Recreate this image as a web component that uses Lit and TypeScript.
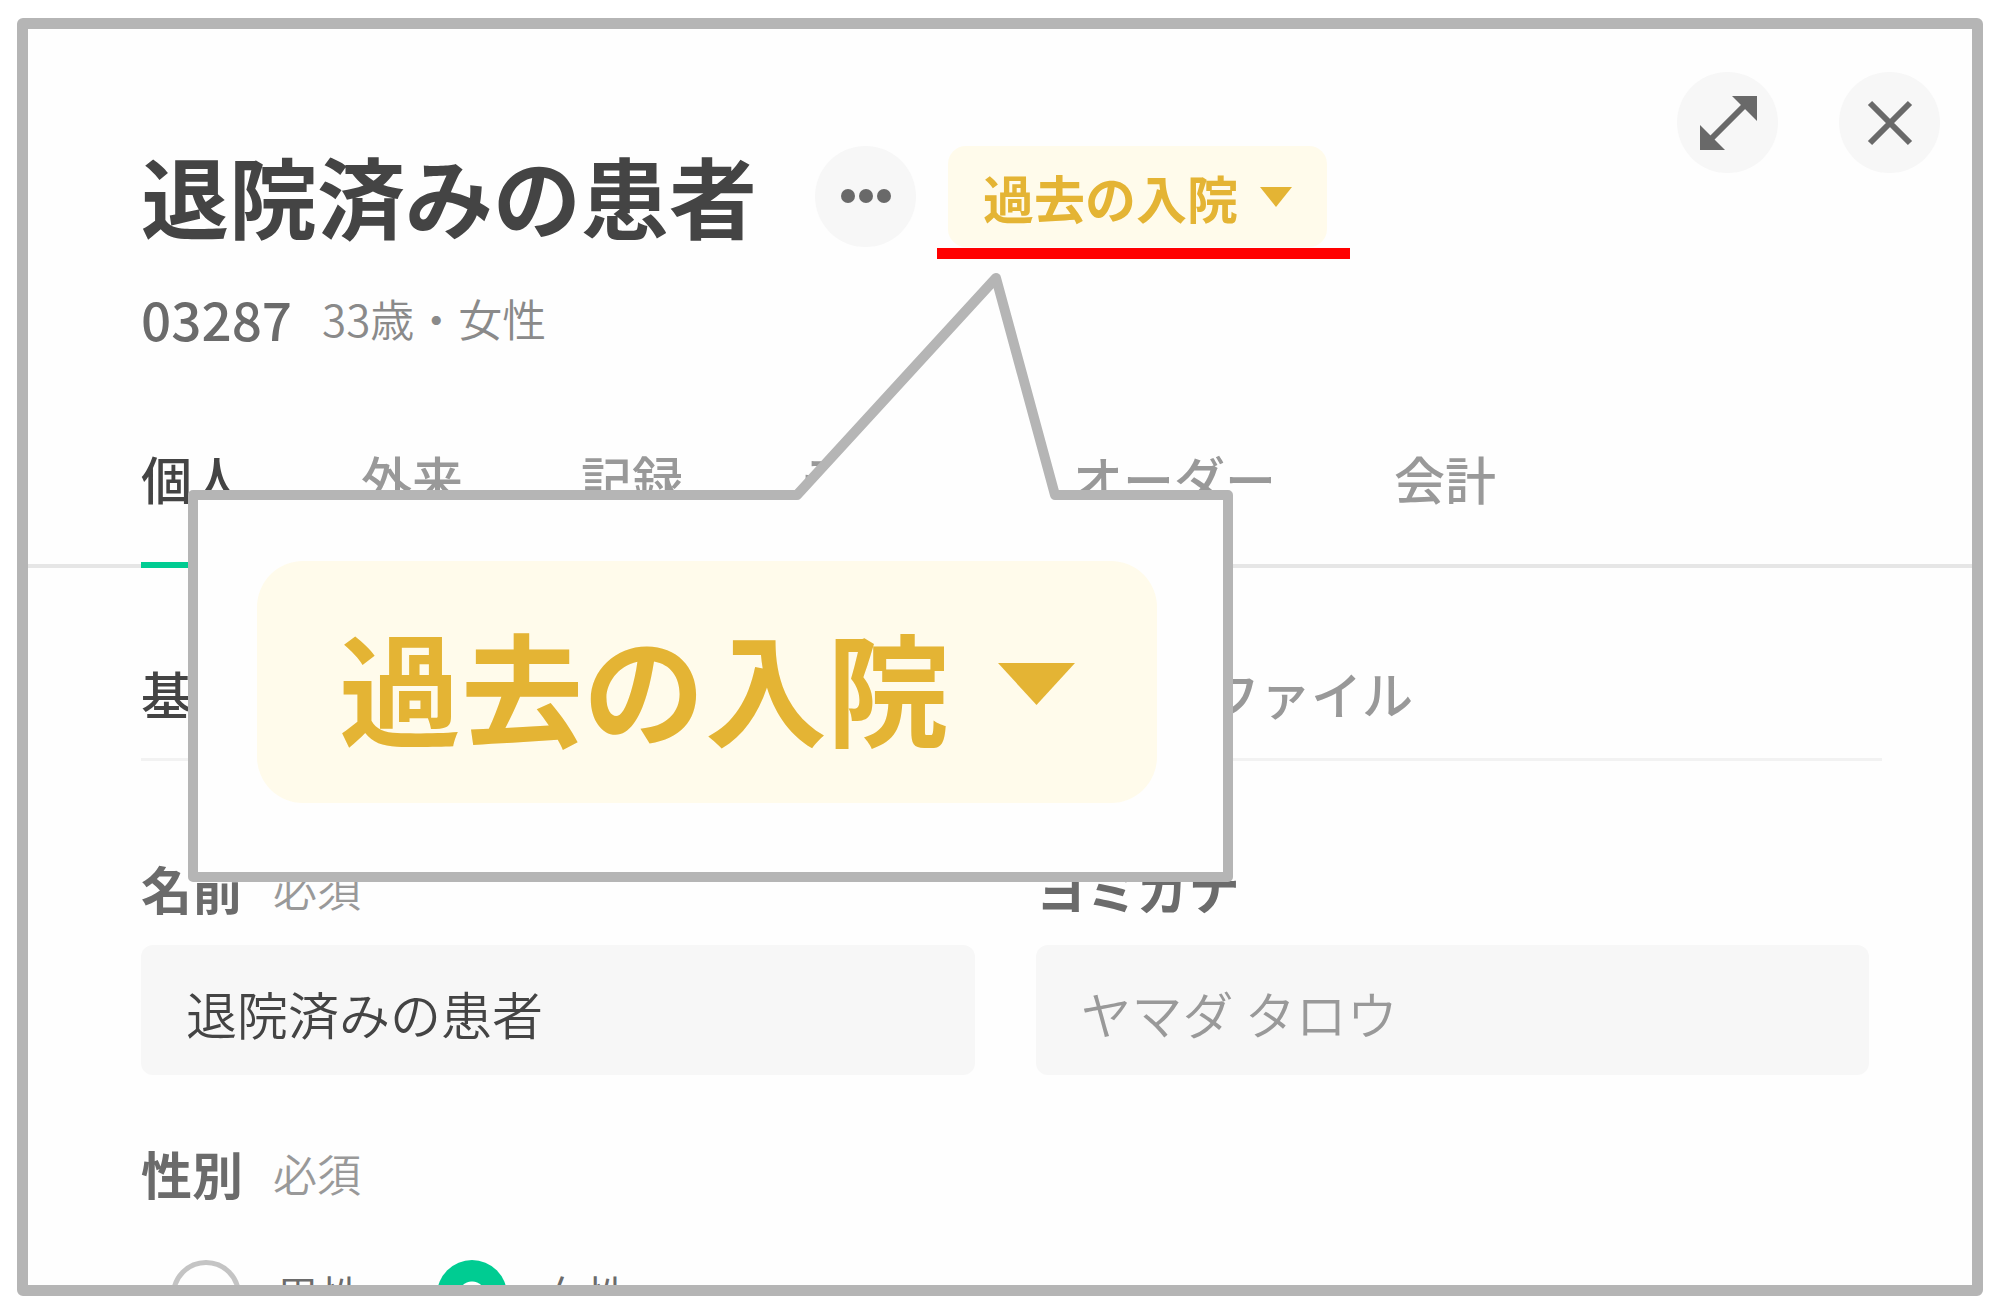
import { LitElement, html, css, svg } from "lit";
import { customElement } from "lit/decorators.js";

const caret = html`<svg class="caret" viewBox="0 0 32 18" preserveAspectRatio="none" aria-hidden="true">
  <path d="M0 0H32L16 18Z" fill="currentColor" />
</svg>`;

const tabs = ["個人", "外来", "記録", "テスト", "オーダー", "会計"];
const subTabs = ["基本", "ファイル"];

@customElement("app-root")
export class AppRoot extends LitElement {
  static styles = css`
    :host {
      display: block;
      box-sizing: border-box;
      height: 100vh;
      padding: 18px 17px;
      background: #fff;
      color: #444;
      font-family: "Noto Sans CJK JP", "Noto Sans", sans-serif;
      font-size: 51px;
      line-height: 64px;
    }
    *,
    *::before {
      box-sizing: border-box;
    }
    button,
    input {
      font: inherit;
      border: 0;
      margin: 0;
    }
    button {
      padding: 0;
      background: none;
      cursor: pointer;
    }
    a {
      color: inherit;
      text-decoration: none;
    }
    h1 {
      margin: 0;
      padding-bottom: 4px;
      font-size: 88px;
      line-height: 100px;
      font-weight: 700;
      white-space: nowrap;
    }
    .panel {
      position: relative;
      height: 100%;
      border: 11px solid #b5b5b5;
      border-radius: 6px;
      overflow: hidden;
      background: #fefefe;
    }
    .tools {
      display: flex;
      justify-content: flex-end;
      gap: 61px;
      height: 101px;
      margin: 43px 32px 0 0;
    }
    .round {
      display: grid;
      flex: none;
      place-items: center;
      width: 101px;
      height: 101px;
      border-radius: 50%;
      background: #f7f7f7;
      color: #696969;
    }
    .round svg {
      width: 60px;
      height: 60px;
    }
    .head {
      display: flex;
      align-items: center;
      padding-left: 113px;
      margin-top: -29px;
    }
    .head .round {
      margin: 0 32px 0 58px;
    }
    .badge {
      display: flex;
      align-items: center;
      gap: 22px;
      height: 101px;
      padding: 2px 35px 0;
      border-radius: 18px;
      background: #fffbeb;
      color: #e4b434;
      font-weight: 700;
      white-space: nowrap;
    }
    .caret {
      flex: none;
      width: 32px;
      height: 20px;
    }
    .meta {
      display: flex;
      align-items: center;
      gap: 30px;
      margin-top: 38px;
      padding-left: 113px;
      color: #8a8a8a;
      font-size: 44px;
      font-weight: 350;
    }
    .id {
      color: #6b6b6b;
      font-size: 53px;
      font-weight: 500;
    }
    .tabs {
      display: flex;
      gap: 118px;
      height: 188px;
      margin-top: 30px;
      padding: 66px 113px 0;
      border-bottom: 4px solid #e6e6e6;
      color: #999;
      font-weight: 500;
    }
    .tabs a {
      height: 122px;
    }
    .tabs a.on {
      border-bottom: 6px solid #00cc92;
      color: #444;
    }
    .content {
      padding: 0 90px 0 113px;
    }
    .sub {
      display: flex;
      gap: 966px;
      padding: 93px 0 33px;
      border-bottom: 3px solid #f2f2f2;
      color: #999;
      font-weight: 500;
    }
    .sub .on {
      color: #444;
    }
    .fields {
      display: grid;
      grid-template-columns: 1fr 1fr;
      gap: 66px 61px;
      padding: 95px 13px 0 0;
    }
    .label {
      display: flex;
      align-items: center;
      gap: 30px;
      color: #6b6b6b;
      font-weight: 700;
    }
    .label small {
      color: #999;
      font-size: 44px;
      font-weight: 350;
    }
    input[type="text"] {
      display: block;
      width: 100%;
      height: 130px;
      margin-top: 25px;
      padding: 6px 45px 0;
      border-radius: 12px;
      background: #f7f7f7;
      color: #444;
      font-weight: 350;
    }
    input::placeholder {
      color: #999;
      opacity: 1;
    }
    fieldset {
      grid-column: 1 / -1;
      margin: 0;
      padding: 0;
      border: 0;
    }
    legend {
      padding: 0;
    }
    .choices {
      display: flex;
      gap: 73px;
      margin-top: 55px;
      padding-left: 30px;
      color: #6b6b6b;
      font-size: 44px;
      font-weight: 350;
    }
    .choices label {
      display: flex;
      align-items: center;
      gap: 35px;
    }
    input[type="radio"] {
      appearance: none;
      width: 70px;
      height: 70px;
      border: 5px solid #c4c4c4;
      border-radius: 50%;
    }
    input[type="radio"]:checked {
      border: 0;
      background: radial-gradient(circle, #fff 13px, #00cc92 14px);
    }
    .underline {
      position: absolute;
      left: 909px;
      top: 219px;
      width: 413px;
      height: 11px;
      background: #f00;
    }
    .callout {
      position: absolute;
      left: 160px;
      top: 239px;
      width: 1045px;
      height: 614px;
    }
    .shape {
      position: absolute;
      inset: 0;
    }
    .big {
      position: absolute;
      left: 69px;
      top: 293px;
      width: 900px;
      height: 242px;
      gap: 49px;
      padding: 4px 82px 0;
      border-radius: 46px;
      font-size: 122px;
    }
    .big .caret {
      width: 77px;
      height: 42px;
    }
  `;

  render() {
    return html`
      <main class="panel">
        <div class="tools">
          <button class="round" aria-label="拡大">
            <svg viewBox="0 0 60 60">
              <path d="M12 47L49 10" stroke="currentColor" stroke-width="6" />
              <path d="M34 3H59V28ZM2 32V57H27Z" fill="currentColor" />
            </svg>
          </button>
          <button class="round" aria-label="閉じる">
            <svg viewBox="0 0 60 60">
              <path d="M10 10L50 50M50 10L10 50" stroke="currentColor" stroke-width="6" />
            </svg>
          </button>
        </div>
        <header class="head">
          <h1>退院済みの患者</h1>
          <button class="round" aria-label="メニュー">
            <svg viewBox="0 0 60 60" fill="currentColor">
              ${[12, 30, 48].map((x) => svg`<circle cx=${x} cy="30" r="7" />`)}
            </svg>
          </button>
          <button class="badge">過去の入院${caret}</button>
        </header>
        <div class="meta"><span class="id">03287</span><span>33歳・女性</span></div>
        <nav class="tabs">
          ${tabs.map((t, i) => html`<a href="#" class=${i === 0 ? "on" : ""}>${t}</a>`)}
        </nav>
        <section class="content">
          <nav class="sub">
            ${subTabs.map((t, i) => html`<a href="#" class=${i === 0 ? "on" : ""}>${t}</a>`)}
          </nav>
          <form class="fields">
            <div>
              <label class="label" for="name">名前<small>必須</small></label>
              <input id="name" type="text" .value=${"退院済みの患者"} />
            </div>
            <div>
              <label class="label" for="kana">ヨミガナ</label>
              <input id="kana" type="text" placeholder="ヤマダ タロウ" />
            </div>
            <fieldset>
              <legend class="label">性別<small>必須</small></legend>
              <div class="choices">
                <label><input type="radio" name="sex" />男性</label>
                <label><input type="radio" name="sex" checked />女性</label>
              </div>
            </fieldset>
          </form>
        </section>
        <div class="underline"></div>
        <div class="callout">
          <svg class="shape" viewBox="0 0 1045 614" aria-hidden="true">
            <path
              d="M5 227H609L808 10L867 227H1040V609H5Z"
              fill="#fefefe"
              stroke="#b5b5b5"
              stroke-width="10"
              stroke-linejoin="round"
            />
          </svg>
          <div class="badge big">過去の入院${caret}</div>
        </div>
      </main>
    `;
  }
}
